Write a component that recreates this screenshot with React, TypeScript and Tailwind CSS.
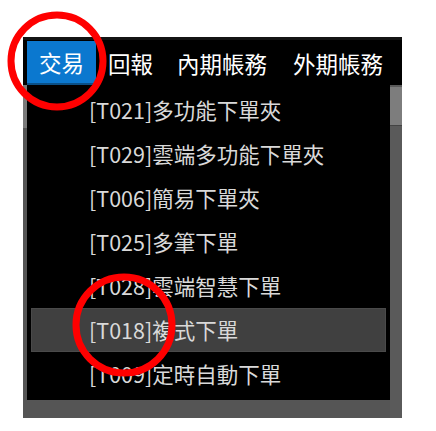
import React from 'react'

// 選單資料
const TABS = [
  { label: '交易', gap: 'ml-0' },
  { label: '回報', gap: 'ml-[12px]' },
  { label: '內期帳務', gap: 'ml-[24px]' },
  { label: '外期帳務', gap: 'ml-[26px]' },
]

const ITEMS = [
  '[T021]多功能下單夾',
  '[T029]雲端多功能下單夾',
  '[T006]簡易下單夾',
  '[T025]多筆下單',
  '[T028]雲端智慧下單',
  '[T018]複式下單',
  '[T009]定時自動下單',
]

const ACTIVE_ROW = 5

const FONT = { fontFamily: '"Noto Sans CJK TC", "Microsoft JhengHei", sans-serif' }

export default function App() {
  return (
    <div className="relative w-[436px] h-[431px] bg-white overflow-hidden" style={FONT}>
      <div className="pt-[37px] pl-[23px]">
        <div className="w-[379px] h-[381px] bg-[#555555] flex flex-col">
          {/* 上方選單列 */}
          <div className="h-[48px] bg-black border-t-[3px] border-[#141414] flex items-end pl-[4px]">
            {TABS.map((t, i) => (
              <div
                key={t.label}
                className={
                  i === 0
                    ? 'h-[44px] w-[69px] bg-[#0b78cf] border-b-2 border-[#0a4f86] flex items-center justify-center text-white text-[22.5px] leading-none'
                    : `h-[44px] flex items-center text-white text-[22.5px] leading-none ${t.gap}`
                }
              >
                {t.label}
              </div>
            ))}
          </div>

          <div className="flex flex-1">
            {/* 左側捲軸 */}
            <div className="w-[4px] flex flex-col">
              <div className="h-[43px] bg-[#7a7a7a]" />
              <div className="flex-1 bg-[#555555]" />
            </div>

            {/* 下拉選單 */}
            <div className="w-[363px] h-[315px] bg-black pt-[3px] pl-[4px] pr-[4px]">
              {ITEMS.map((item, i) => (
                <div
                  key={item}
                  className={
                    i === ACTIVE_ROW
                      ? 'h-[44px] flex items-center pl-[57px] bg-[#404040] border border-[#4a4a4a] text-[#d9d9d9] text-[21.5px] leading-none'
                      : 'h-[44px] flex items-center pl-[57px] border border-transparent text-[#d9d9d9] text-[21.5px] leading-none'
                  }
                >
                  {item}
                </div>
              ))}
            </div>

            {/* 右側捲軸 */}
            <div className="w-[12px] flex flex-col">
              <div className="h-[2px] bg-[#5a5a5a]" />
              <div className="h-[39px] bg-[#7d7d7d] border-b border-[#444444]" />
              <div className="flex-1 bg-[#5a5a5a]" />
            </div>
          </div>
        </div>
      </div>

      {/* 紅色標註圈 */}
      <svg className="absolute left-0 top-0 pointer-events-none" width="436" height="431">
        <circle cx="57" cy="61" r="46" fill="none" stroke="#ff0000" strokeWidth="7" />
        <circle cx="124" cy="325" r="48" fill="none" stroke="#ff0000" strokeWidth="7" />
      </svg>
    </div>
  )
}
